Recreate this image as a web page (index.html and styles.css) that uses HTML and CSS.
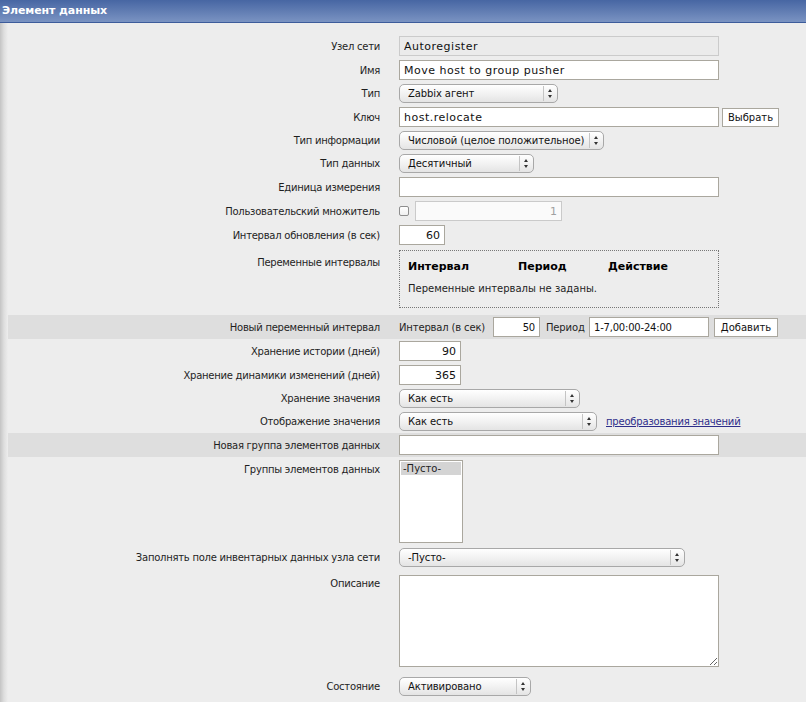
FILE: index.html
```html
<!DOCTYPE html>
<html lang="ru">
<head>
  <meta charset="UTF-8" />
  <title>Элемент данных</title>
  <link rel="stylesheet" href="styles.css">
</head>
<body>
  <div class="header">Элемент данных</div>

  <div class="form">
    <div class="row">
      <div class="label">Узел сети</div>
      <div class="field"><input class="text w320 readonly" value="Autoregister" readonly /></div>
    </div>
    <div class="row">
      <div class="label">Имя</div>
      <div class="field"><input class="text w320" value="Move host to group pusher" /></div>
    </div>
    <div class="row">
      <div class="label">Тип</div>
      <div class="field">
        <div class="select w159"><select><option>Zabbix агент</option></select><span class="arrows"></span></div>
      </div>
    </div>
    <div class="row">
      <div class="label">Ключ</div>
      <div class="field gap3">
        <input class="text w320" value="host.relocate" />
        <button class="btn w57">Выбрать</button>
      </div>
    </div>
    <div class="row">
      <div class="label">Тип информации</div>
      <div class="field">
        <div class="select w205"><select><option>Числовой (целое положительное)</option></select><span class="arrows"></span></div>
      </div>
    </div>
    <div class="row">
      <div class="label">Тип данных</div>
      <div class="field">
        <div class="select w135"><select><option>Десятичный</option></select><span class="arrows"></span></div>
      </div>
    </div>
    <div class="row">
      <div class="label">Единица измерения</div>
      <div class="field"><input class="text w320" value="" /></div>
    </div>
    <div class="row">
      <div class="label">Пользовательский множитель</div>
      <div class="field gap6">
        <input type="checkbox" class="check" />
        <input class="text w147 num disabled" value="1" disabled />
      </div>
    </div>
    <div class="row">
      <div class="label">Интервал обновления (в сек)</div>
      <div class="field"><input class="text w46 num" value="60" /></div>
    </div>
    <div class="row row-intervals">
      <div class="label top">Переменные интервалы</div>
      <div class="field">
        <div class="intervals">
          <div class="intervals-head">
            <span>Интервал</span>
            <span>Период</span>
            <span>Действие</span>
          </div>
          <div class="intervals-empty">Переменные интервалы не заданы.</div>
        </div>
      </div>
    </div>
    <div class="row shaded">
      <div class="label">Новый переменный интервал</div>
      <div class="field gap6 small">
        <span class="w88">Интервал (в сек)</span>
        <input class="text w47 num" value="50" />
        <span class="w37">Период</span>
        <input class="text w120" value="1-7,00:00-24:00" />
        <button class="btn w64 ml-1">Добавить</button>
      </div>
    </div>
    <div class="row">
      <div class="label">Хранение истории (дней)</div>
      <div class="field"><input class="text w62 num" value="90" /></div>
    </div>
    <div class="row">
      <div class="label">Хранение динамики изменений (дней)</div>
      <div class="field"><input class="text w62 num" value="365" /></div>
    </div>
    <div class="row">
      <div class="label">Хранение значения</div>
      <div class="field">
        <div class="select w181"><select><option>Как есть</option></select><span class="arrows"></span></div>
      </div>
    </div>
    <div class="row">
      <div class="label">Отображение значения</div>
      <div class="field gap9">
        <div class="select w198"><select><option>Как есть</option></select><span class="arrows"></span></div>
        <a href="#" class="link">преобразования значений</a>
      </div>
    </div>
    <div class="row shaded">
      <div class="label">Новая группа элементов данных</div>
      <div class="field"><input class="text w320" value="" /></div>
    </div>
    <div class="row row-groups">
      <div class="label top">Группы элементов данных</div>
      <div class="field">
        <div class="listbox">
          <div class="option selected">-Пусто-</div>
        </div>
      </div>
    </div>
    <div class="row">
      <div class="label">Заполнять поле инвентарных данных узла сети</div>
      <div class="field">
        <div class="select w286"><select><option>-Пусто-</option></select><span class="arrows"></span></div>
      </div>
    </div>
    <div class="row row-desc">
      <div class="label top">Описание</div>
      <div class="field"><textarea class="textarea"></textarea></div>
    </div>
    <div class="row row-status">
      <div class="label">Состояние</div>
      <div class="field">
        <div class="select w132"><select><option>Активировано</option></select><span class="arrows"></span></div>
      </div>
    </div>
  </div>
</body>
</html>
```

FILE: styles.css
```css
body {
  margin: 0;
  font-family: 'DejaVu Sans', Verdana, sans-serif;
  font-size: 10px;
  color: #1e1e1e;
  background: linear-gradient(to right, #c4c4c4 0, #dedede 4px, #ededed 8px) #ededed;
  min-height: 702px;
}
.header {
  height: 22px;
  line-height: 22px;
  padding-left: 2px;
  color: #fff;
  font-weight: bold;
  font-size: 11px;
  letter-spacing: -0.1px;
  background: linear-gradient(#4766a3, #7a93c2);
  border-bottom: 1px solid #3d5c9b;
}
.form {
  margin-left: 8px;
  padding-top: 11px;
}
.row {
  display: grid;
  grid-template-columns: 372px 1fr;
  align-items: center;
  padding: 2px 0;
}
.label {
  text-align: right;
  letter-spacing: -0.25px;
}
.label.top {
  align-self: start;
}
.field {
  padding-left: 19px;
  display: flex;
  align-items: center;
}
.gap3 { gap: 3px; }
.gap6 { gap: 6px; }
.gap9 { gap: 9px; }
.ml-1 { margin-left: -1px; }

.shaded {
  background: #dedede;
}
.small {
  font-size: 10px;
  letter-spacing: -0.15px;
  white-space: nowrap;
}
.w88 { width: 88px; }
.w37 { width: 37px; }

.text {
  box-sizing: border-box;
  height: 20px;
  margin: 0;
  padding: 0 4px;
  border: 1px solid #aaa79e;
  background: #fff;
  font-family: 'DejaVu Sans', Verdana, sans-serif;
  font-size: 11px;
  letter-spacing: 0.5px;
  color: #111;
  outline: none;
}
.text.num {
  text-align: right;
  letter-spacing: 0;
}
.small .text {
  font-size: 10px;
  letter-spacing: -0.2px;
}
.text.readonly {
  background: #ebebeb;
  border-color: #cbcbcb;
}
.text.disabled {
  background: #fafafa;
  border-color: #cacaca;
  color: #a0a0a0;
}
.w46 { width: 46px; }
.w47 { width: 47px; }
.w62 { width: 62px; }
.w120 { width: 120px; }
.w147 { width: 147px; }
.w320 { width: 320px; }

.btn {
  box-sizing: border-box;
  height: 19px;
  padding: 0;
  border: 1px solid #aaa79e;
  background: #fff;
  font-family: 'DejaVu Sans', Verdana, sans-serif;
  font-size: 10px;
  color: #111;
}
.w57 { width: 57px; }
.w64 { width: 64px; }

.check {
  appearance: none;
  margin: 0;
  width: 10px;
  height: 10px;
  border: 1px solid #8e8e8e;
  border-radius: 2px;
  background: linear-gradient(#fff, #f0f0f0);
}

.select {
  position: relative;
  display: inline-block;
  height: 19px;
}
.select select {
  appearance: none;
  box-sizing: border-box;
  width: 100%;
  height: 100%;
  margin: 0;
  padding: 0 15px 0 8px;
  border: 1px solid #a8a8a8;
  border-radius: 5px;
  background: linear-gradient(#ffffff, #f2f2f2 50%, #e4e4e4);
  font-family: 'DejaVu Sans', Verdana, sans-serif;
  font-size: 10px;
  letter-spacing: -0.1px;
  color: #111;
  outline: none;
}
.select .arrows {
  position: absolute;
  right: 1px;
  top: 2px;
  bottom: 2px;
  width: 13px;
  border-left: 1px solid #c4c4c4;
  pointer-events: none;
}
.select .arrows::before,
.select .arrows::after {
  content: "";
  position: absolute;
  left: 4px;
  border-left: 2.5px solid transparent;
  border-right: 2.5px solid transparent;
}
.select .arrows::before {
  top: 3px;
  border-bottom: 3px solid #333;
}
.select .arrows::after {
  bottom: 3px;
  border-top: 3px solid #333;
}
.w132 { width: 132px; }
.w135 { width: 135px; }
.w159 { width: 159px; }
.w181 { width: 181px; }
.w198 { width: 198px; }
.w205 { width: 205px; }
.w286 { width: 286px; }

.link {
  color: #2e2e8a;
  text-decoration: underline;
  font-size: 10px;
  letter-spacing: -0.2px;
}

.row-intervals {
  padding: 3px 0 7px;
}
.row-intervals .label {
  padding-top: 7px;
}
.intervals {
  box-sizing: border-box;
  width: 320px;
  height: 58px;
  border: 1px dotted #777;
  padding: 9px 8px 0;
}
.intervals-head {
  display: grid;
  grid-template-columns: 110px 90px auto;
  font-weight: bold;
  font-size: 11px;
  color: #000;
}
.intervals-empty {
  margin-top: 10px;
}

.row-groups {
  padding: 3px 0;
}
.row-groups .label {
  padding-top: 4px;
}
.listbox {
  box-sizing: border-box;
  width: 64px;
  height: 83px;
  border: 1px solid #aaa79e;
  background: #fff;
  padding: 1px;
}
.listbox .option {
  height: 13px;
  line-height: 13px;
  padding-left: 2px;
}
.listbox .option.selected {
  background: #d4d4d4;
}

.row-desc {
  padding: 6px 0 2px;
}
.row-desc .label {
  padding-top: 3px;
}
.textarea {
  box-sizing: border-box;
  display: block;
  width: 320px;
  height: 92px;
  margin: 0;
  border: 1px solid #aaa79e;
  background: #fff;
  outline: none;
}
.row-status {
  padding: 8px 0 2px;
}
```
